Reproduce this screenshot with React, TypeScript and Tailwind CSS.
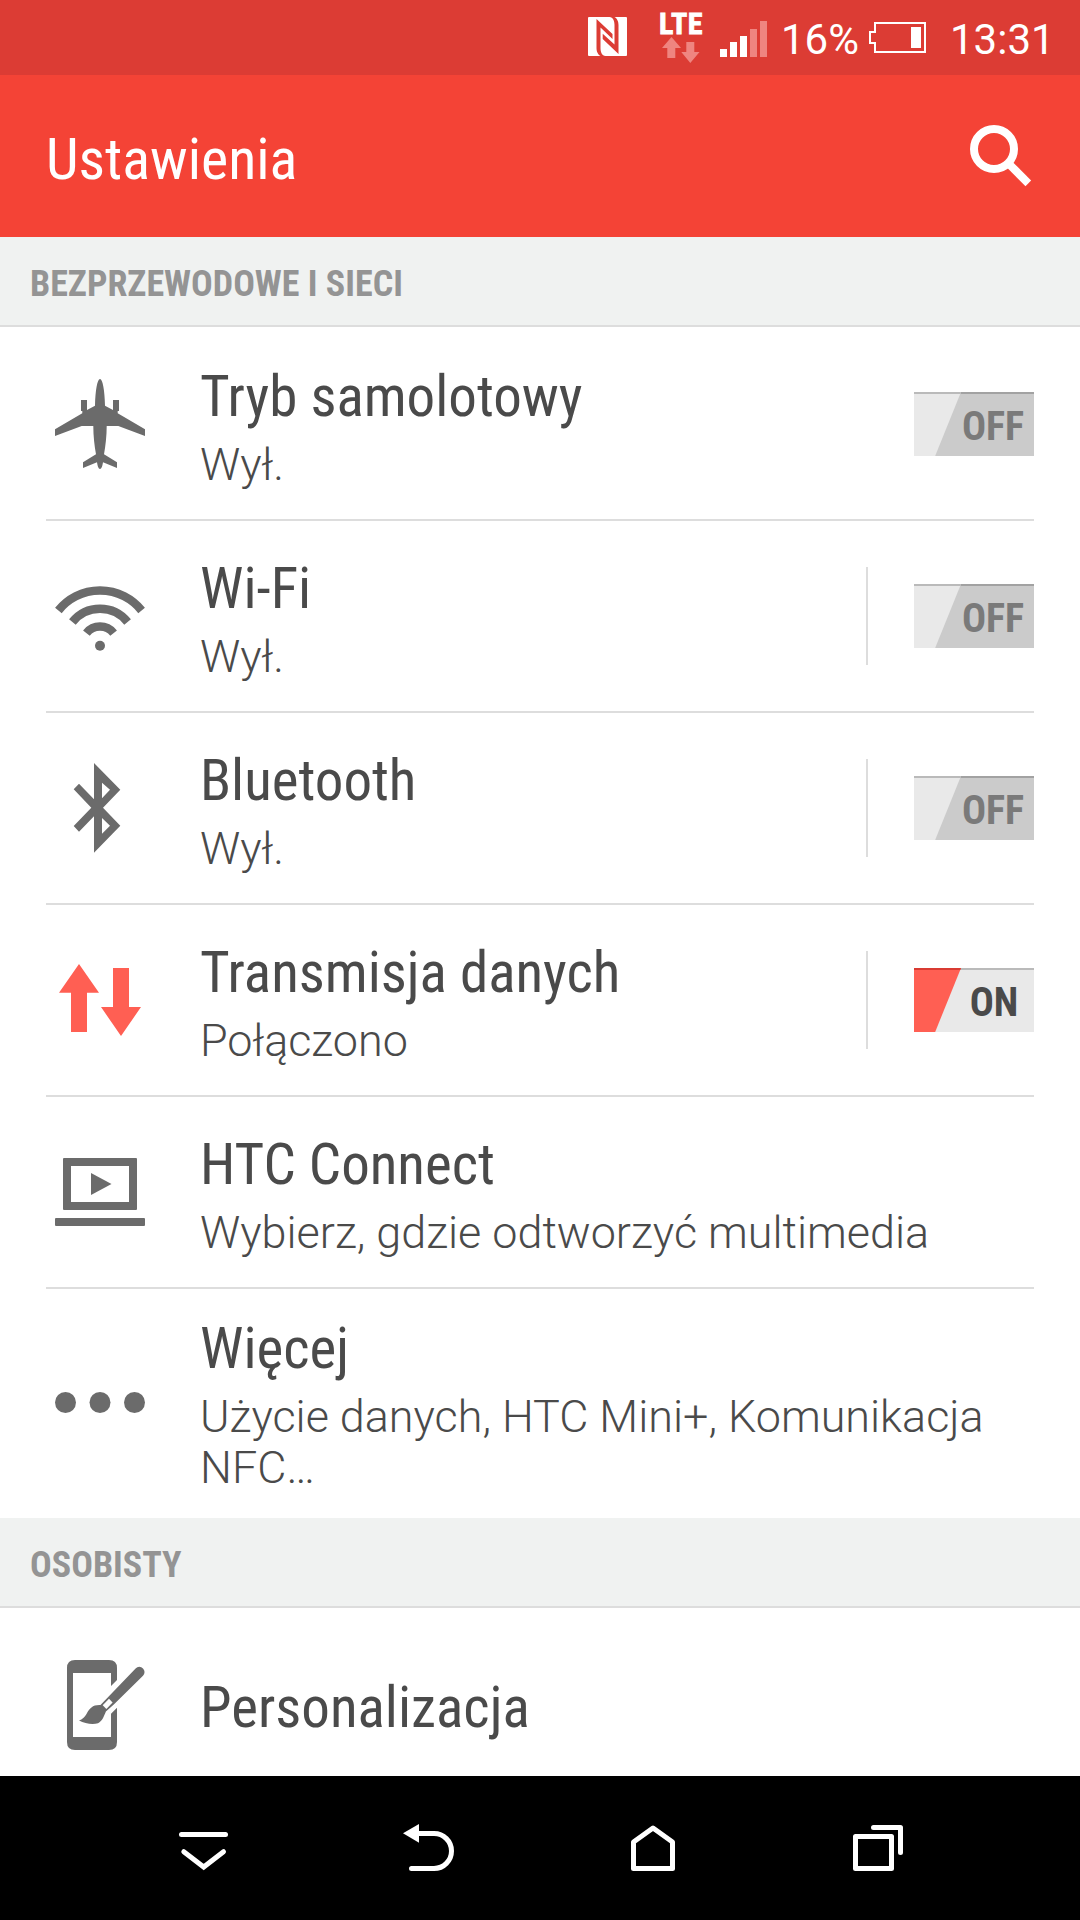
import { ReactNode, useState } from 'react';

interface SettingItem {
  id: string;
  title: string;
  summary?: string;
  icon: ReactNode;
  toggle?: boolean;
  divided?: boolean;
}

const AirplaneIcon = () => (
  <svg className="w-[90px] h-[90px]" viewBox="0 0 90 90" fill="currentColor">
    <path d="M45 0C47.6 0 49.7 11 50 26.7L58 31V21H64V32H62.7V34.3L90 50.3V57L63.3 47H51.7C51.7 57 50.5 67 49 75.3L62 83.3V89L48 83.3C47.5 87 46.5 90 45 90C43.5 90 42.5 87 42 83.3L28 89V83.3L41 75.3C39.5 67 38.3 57 38.3 47H26.7L0 57V50.3L27.3 34.3V32H26V21H32V31L40 26.7C40.3 11 42.4 0 45 0Z" />
  </svg>
);

const WifiIcon = () => (
  <svg className="w-[90px] h-[90px]" viewBox="0 0 90 90" fill="none" stroke="currentColor" strokeWidth={8.5}>
    <path d="M3.4 39.5A53.25 53.25 0 0 1 86.6 39.5" />
    <path d="M17.4 51A35.3 35.3 0 0 1 72.6 51" />
    <path d="M31.4 62.1A17.4 17.4 0 0 1 58.6 62.1" />
    <circle cx="45" cy="74.8" r="5" fill="currentColor" stroke="none" />
  </svg>
);

const BluetoothIcon = () => (
  <svg className="w-[90px] h-[90px]" viewBox="0 0 90 90" fill="currentColor" fillRule="evenodd">
    <path d="M39 0L65.3 26.7L48 44.7L65.3 62.7L39 89.7V53.3L24 68.7L18.7 63L36.3 44.7L18.7 26.3L24 20.7L39 36.3ZM47 19.7V35.3L55 26.7ZM47 55V70.7L55 62.7Z" />
  </svg>
);

const MobileDataIcon = () => (
  <svg className="w-[90px] h-[90px] text-[#ff5f53]" viewBox="0 0 90 90" fill="currentColor">
    <path d="M24 9L44 37.7H32V77H16V37.7H4Z" />
    <path d="M58 13H74V52H86L66 81L46 52H58Z" />
  </svg>
);

const ConnectIcon = () => (
  <svg className="w-[90px] h-[90px]" viewBox="0 0 90 90" fill="currentColor">
    <path fillRule="evenodd" d="M9 11H81Q82 11 82 12V62Q82 63 81 63H9Q8 63 8 62V12Q8 11 9 11ZM16 19V55H74V19Z" />
    <path d="M36 26L56.5 37L36 48Z" />
    <rect x="0" y="71" width="90" height="8" rx="1" />
  </svg>
);

const MoreIcon = () => (
  <svg className="w-[90px] h-[90px]" viewBox="0 0 90 90" fill="currentColor">
    <circle cx="10.5" cy="44.5" r="10.5" />
    <circle cx="45" cy="44.5" r="10.5" />
    <circle cx="79.5" cy="44.5" r="10.5" />
  </svg>
);

const PersonalizeIcon = () => (
  <svg className="w-[90px] h-[90px]" viewBox="0 0 90 90" fill="currentColor">
    <path d="M20 0H54Q62 0 62 8V20L56 26V13H18V77H56V53.7L62 47.7V82Q62 90 54 90H20Q12 90 12 82V8Q12 0 20 0Z" />
    <path d="M80.6 8.4A5 5 0 0 1 88 15.8L58.8 44.4L50.9 51.6C49 56 47.5 61 43 63.2C38 64.8 30 63.8 24 60.5C27.5 59.3 29.5 57.5 31.5 54C34.5 48 38 44.6 45.5 45Z" />
    <path d="M54 38.8L57.6 42.6L51.4 49L47.7 45.2Z" fill="#fff" />
  </svg>
);

const wireless: SettingItem[] = [
  { id: 'airplane', title: 'Tryb samolotowy', summary: 'Wył.', icon: <AirplaneIcon />, toggle: true },
  { id: 'wifi', title: 'Wi-Fi', summary: 'Wył.', icon: <WifiIcon />, toggle: true, divided: true },
  { id: 'bluetooth', title: 'Bluetooth', summary: 'Wył.', icon: <BluetoothIcon />, toggle: true, divided: true },
  { id: 'data', title: 'Transmisja danych', summary: 'Połączono', icon: <MobileDataIcon />, toggle: true, divided: true },
  { id: 'connect', title: 'HTC Connect', summary: 'Wybierz, gdzie odtworzyć multimedia', icon: <ConnectIcon /> },
];

function Toggle({ on, onClick }: { on: boolean; onClick: () => void }) {
  return (
    <button
      onClick={onClick}
      className={`relative w-[120px] h-16 shrink-0 border-t-2 pt-[3px] text-center text-[40px] leading-[60px] font-bold ${
        on
          ? 'pl-10 bg-[#e9e9e9] border-[#bababa] text-[#4a4a4a]'
          : 'pl-[38px] bg-[#cbcbcb] border-[#a2a2a2] text-[#7a7a7a]'
      }`}
    >
      <span
        className={`absolute left-0 -top-0.5 w-[47px] h-16 border-t-2 [clip-path:polygon(0_0,100%_0,45%_100%,0_100%)] ${
          on ? 'bg-[#ff5f53] border-[#d93b32]' : 'bg-[#e9e9e9] border-[#bababa]'
        }`}
      />
      {on ? 'ON' : 'OFF'}
    </button>
  );
}

function SectionHeader({ children }: { children: ReactNode }) {
  return (
    <h2 className="h-[90px] border-b-2 border-[#dddddd] bg-[#f0f2f1] pl-[30px] pt-[5px] text-[36px] leading-[84px] font-bold text-[#949494]">
      {children}
    </h2>
  );
}

function SettingRow({ item, on, onToggle }: { item: SettingItem; on?: boolean; onToggle?: () => void }) {
  return (
    <div className="mx-[46px] h-48 flex items-center border-b-2 border-[#dddddd]">
      <div className="ml-[9px] mr-[55px] shrink-0 text-[#6b6b6b]">{item.icon}</div>
      <div className="flex-1 pt-[6px]">
        <div className="text-[57px] leading-[66px]">{item.title}</div>
        {item.summary && (
          <div className="mt-[9px] text-[44.9px] leading-[51px] font-light [font-stretch:100%]">{item.summary}</div>
        )}
      </div>
      {item.divided && <div className="mr-[46px] w-0.5 h-[98px] bg-[#dddddd]" />}
      {onToggle && <Toggle on={!!on} onClick={onToggle} />}
    </div>
  );
}

function StatusBar() {
  return (
    <div className="h-[75px] shrink-0 flex items-center justify-end bg-[#dc3c34] pr-[27px] text-[42px] text-white [font-stretch:100%]">
      {/* NFC */}
      <svg className="w-[39px] h-[39px] mr-[33px] mb-0.5" viewBox="0 0 39 39">
        <rect width="39" height="39" rx="1" fill="#fff" />
        <g fill="#dc3c34">
          <path d="M8.5 2L24.5 17V22L12.5 10.5V31C12.5 35 14 39 17.5 39H12.5C9 37 8.5 33 8.5 31Z" />
          <path d="M14.7 16.7L26.5 27.5V8C26.5 4 25 0 21.5 0H26.5C30 2 30.5 6 30.5 8V37L14.7 22Z" />
        </g>
      </svg>

      {/* Network type and traffic */}
      <div className="w-[42px] h-[75px] mr-[18px] flex flex-col items-center">
        <div className="mt-[10px] h-[27px] text-[30px] leading-[27px] tracking-[0.5px] font-bold [font-stretch:75%] [-webkit-text-stroke:0.8px_white]">
          LTE
        </div>
        <svg className="w-[38px] h-[26px] shrink-0" viewBox="0 0 38 26" fill="#ef8580">
          <path d="M9.5 0L19 11H13.3V21H5.3V11H0Z" />
          <path d="M24.3 5H32.3V15H37.5L28.3 26L19.3 15H24.3Z" />
        </svg>
      </div>

      <svg className="w-[47px] h-[36px] mr-[14px] mt-[3px]" viewBox="0 0 47 36" fill="#fff">
        <path d="M0 28H7V36H0ZM10 21H17V36H10ZM20 15H27V36H20Z" />
        <path d="M30 8H37V36H30ZM40 0H47V36H40Z" fill="#ef8580" />
      </svg>

      <span className="w-[79px] pt-[3px] whitespace-nowrap">16%</span>

      <svg className="w-[57px] h-[31px] ml-[9px] mr-[24px]" viewBox="0 0 57 31" fill="none" stroke="#fff" strokeWidth={2}>
        <path d="M6 1H56V30H6V21H1V10H6Z" />
        <path d="M42 5H52V26H42Z" fill="#fff" stroke="none" />
      </svg>

      <span className="w-[103px] pt-[3px] whitespace-nowrap">13:31</span>
    </div>
  );
}

function NavBar() {
  return (
    <nav className="h-36 shrink-0 bg-black pl-[91px]">
      <div className="w-[900px] h-full grid grid-cols-4 items-center justify-items-center">
        <svg className="w-[61px] h-[60px]" viewBox="0 0 61 60" fill="none" stroke="#fff" strokeWidth={5} strokeLinecap="round">
          <path d="M8.5 16.5H52.5" />
          <path d="M10.8 33.7L30.7 49L50.5 33.7" />
        </svg>
        <svg className="w-[61px] h-[60px]" viewBox="0 0 61 60" fill="none" stroke="#fff" strokeWidth={5} strokeLinecap="round">
          <path d="M18 15.5H36A17.5 17.5 0 0 1 36 50.5H13.5" />
          <path d="M5 15.3L21 6V24.7Z" fill="#fff" stroke="none" />
        </svg>
        <svg className="w-[61px] h-[60px]" viewBox="0 0 61 60" fill="none" stroke="#fff" strokeWidth={5} strokeLinejoin="round">
          <path d="M10.5 50.5V24L30 10L49.5 24V50.5Z" />
        </svg>
        <svg className="w-[61px] h-[60px]" viewBox="0 0 61 60" fill="none" stroke="#fff" strokeWidth={5} strokeLinecap="round" strokeLinejoin="round">
          <path d="M7.5 18.5H43.5V50.5H7.5Z" />
          <path d="M25.5 9.5H52.5V34.5" />
        </svg>
      </div>
    </nav>
  );
}

export default function App() {
  const [enabled, setEnabled] = useState<Record<string, boolean>>({ data: true });

  const toggleSetting = (id: string) => {
    setEnabled({ ...enabled, [id]: !enabled[id] });
  };

  return (
    <div className="w-[1080px] h-[1920px] flex flex-col overflow-hidden bg-white font-['Roboto',sans-serif] [font-stretch:75%] text-[#4a4a4a]">
      <StatusBar />

      <header className="h-[162px] shrink-0 flex items-center justify-between bg-[#f44336] pl-[46px] pr-12 text-white">
        <h1 className="pt-[5px] text-[58px] leading-[66px]">Ustawienia</h1>
        <svg className="w-[62px] h-[62px]" viewBox="0 0 62 62" fill="none" stroke="#fff" strokeWidth={8}>
          <circle cx="24" cy="24" r="20" />
          <path d="M38 38L58.3 58.3" />
        </svg>
      </header>

      <main className="flex-1 overflow-hidden">
        <SectionHeader>BEZPRZEWODOWE I SIECI</SectionHeader>
        <div className="pt-0.5">
          {wireless.map((item) => (
            <SettingRow
              key={item.id}
              item={item}
              on={enabled[item.id]}
              onToggle={item.toggle ? () => toggleSetting(item.id) : undefined}
            />
          ))}
          {/* Two-line summary, taller than the other rows */}
          <div className="mx-[46px] h-[229px] flex items-center pb-px">
            <div className="ml-[9px] mr-[55px] shrink-0 text-[#6b6b6b]">
              <MoreIcon />
            </div>
            <div className="flex-1 pt-[3px]">
              <div className="text-[57px] leading-[66px]">Więcej</div>
              <div className="mt-[9px] text-[44.9px] leading-[51px] font-light [font-stretch:100%]">
                Użycie danych, HTC Mini+, Komunikacja NFC…
              </div>
            </div>
          </div>
        </div>

        <SectionHeader>OSOBISTY</SectionHeader>
        <div className="pt-0.5">
          <SettingRow item={{ id: 'personalize', title: 'Personalizacja', icon: <PersonalizeIcon /> }} />
        </div>
      </main>

      <NavBar />
    </div>
  );
}
